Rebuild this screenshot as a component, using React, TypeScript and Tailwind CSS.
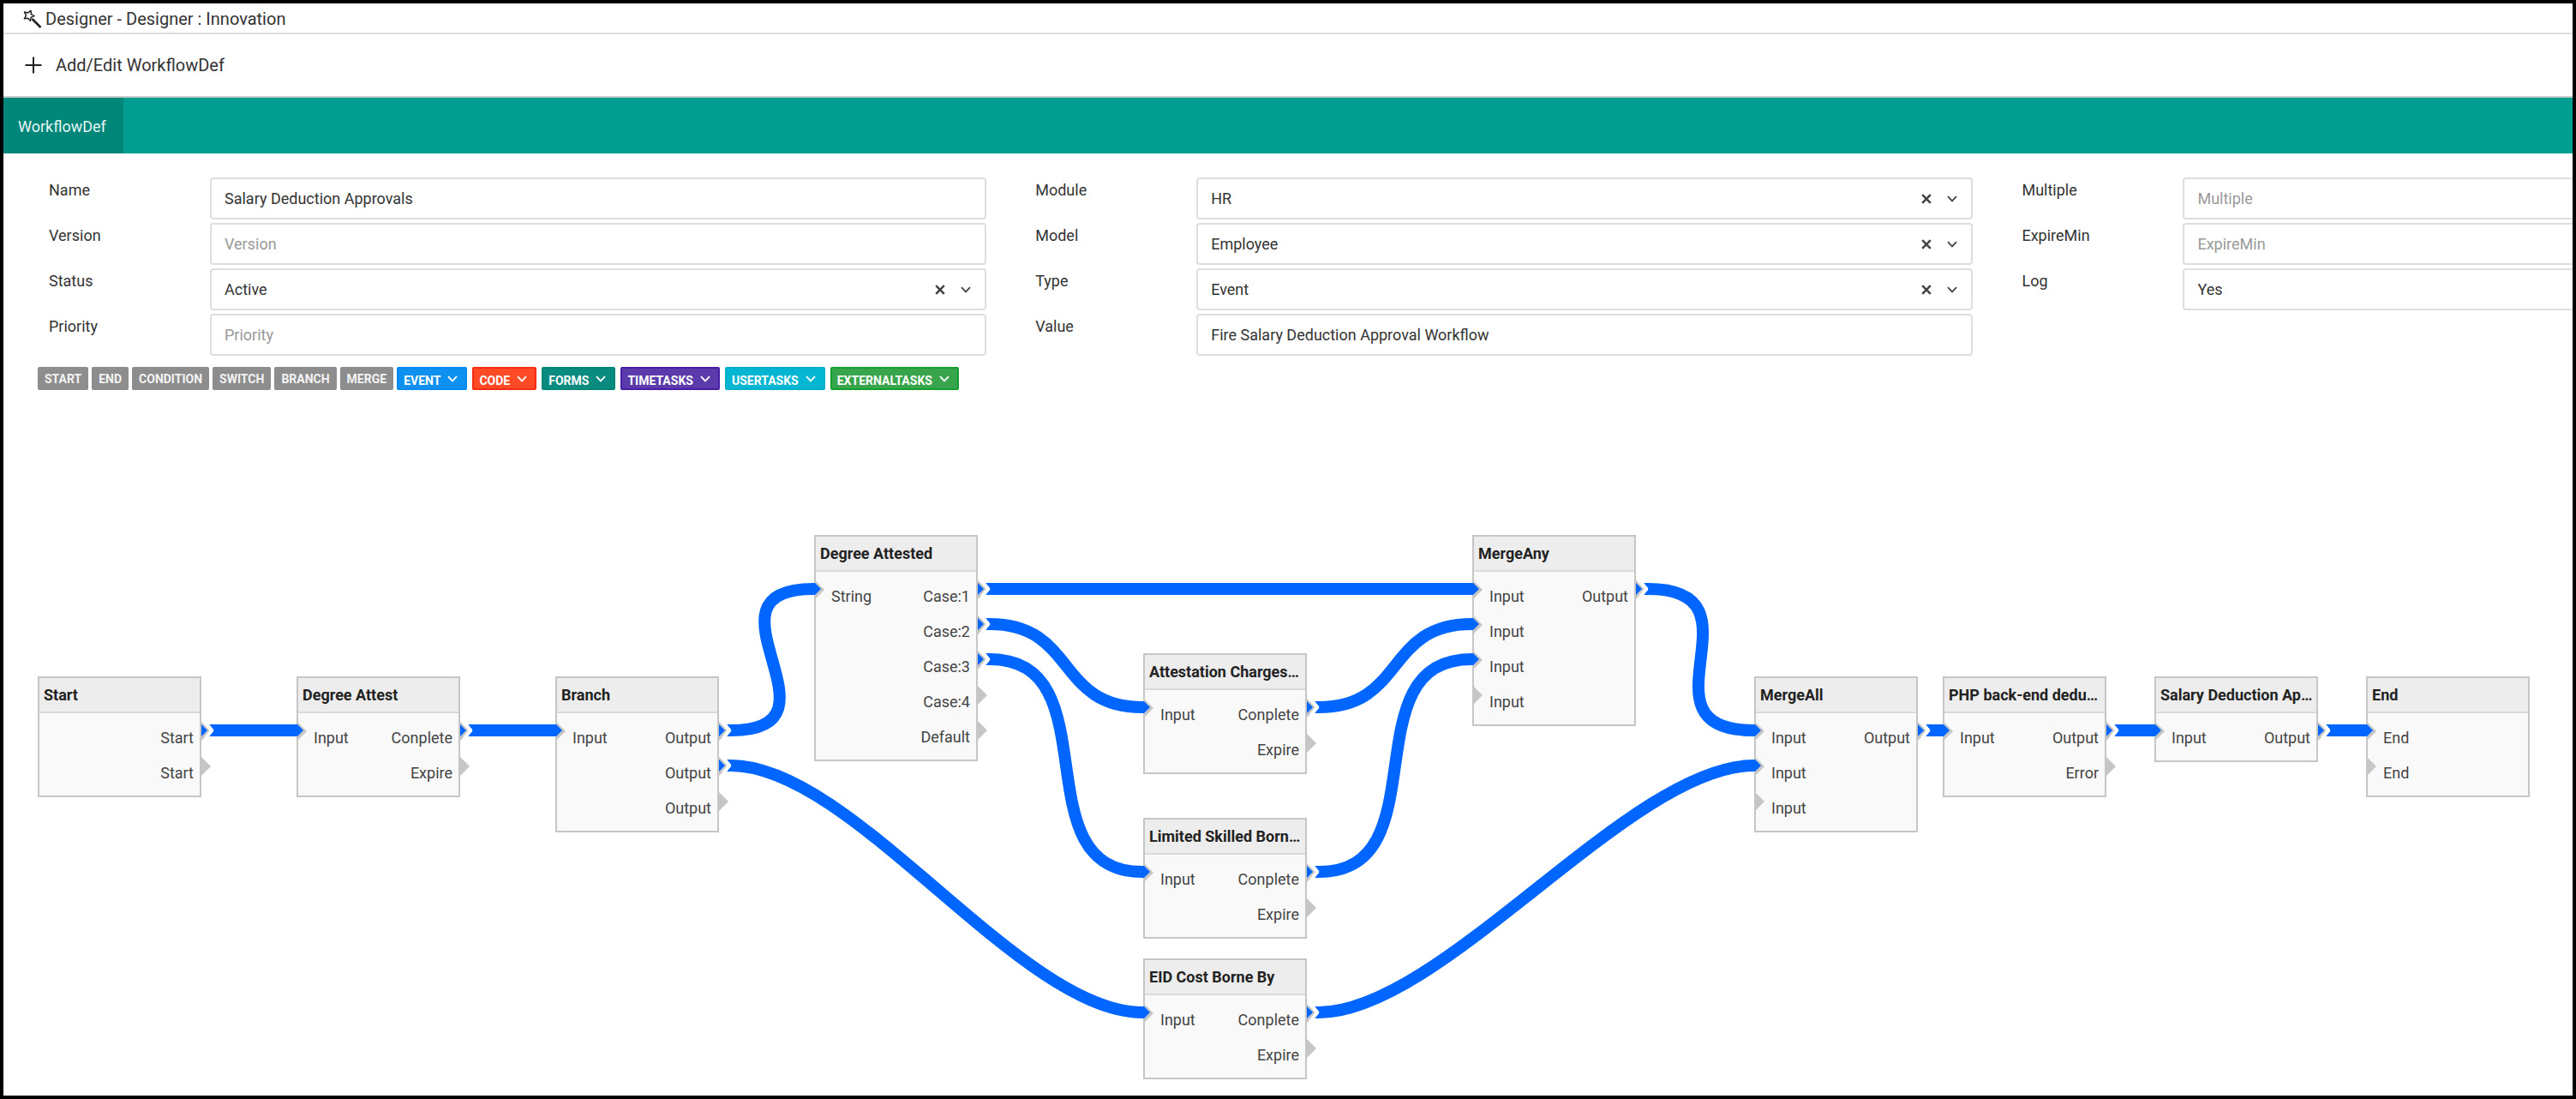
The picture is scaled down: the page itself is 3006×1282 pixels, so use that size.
import { useId } from 'react';

type FieldDef = {
  label: string;
  kind: 'text' | 'select';
  value?: string;
  clearable?: boolean;
};

const COLUMNS: FieldDef[][] = [
  [
    { label: 'Name', kind: 'text', value: 'Salary Deduction Approvals' },
    { label: 'Version', kind: 'text' },
    { label: 'Status', kind: 'select', value: 'Active', clearable: true },
    { label: 'Priority', kind: 'text' },
  ],
  [
    { label: 'Module', kind: 'select', value: 'HR', clearable: true },
    { label: 'Model', kind: 'select', value: 'Employee', clearable: true },
    { label: 'Type', kind: 'select', value: 'Event', clearable: true },
    { label: 'Value', kind: 'text', value: 'Fire Salary Deduction Approval Workflow' },
  ],
  [
    { label: 'Multiple', kind: 'text' },
    { label: 'ExpireMin', kind: 'text' },
    { label: 'Log', kind: 'select', value: 'Yes', clearable: true },
  ],
];

const SHAPES = ['START', 'END', 'CONDITION', 'SWITCH', 'BRANCH', 'MERGE'];

const MENUS = [
  { label: 'EVENT', color: 'bg-[#0d90f0] border-[#0089f2]' },
  { label: 'CODE', color: 'bg-[#ff4a26] border-[#fb2c14]' },
  { label: 'FORMS', color: 'bg-[#098c7f] border-[#008577]' },
  { label: 'TIMETASKS', color: 'bg-[#5b3bab] border-[#4a1fa8]' },
  { label: 'USERTASKS', color: 'bg-[#04b6d2] border-[#00b0cd]' },
  { label: 'EXTERNALTASKS', color: 'bg-[#38a54c] border-[#139f30]' },
];

type NodeDef = {
  id: string;
  title: string;
  x: number;
  y: number;
  inputs: string[];
  outputs: string[];
};

const NODES: NodeDef[] = [
  { id: 'start', title: 'Start', x: 0, y: 325, inputs: [], outputs: ['Start', 'Start'] },
  { id: 'attest', title: 'Degree Attest', x: 302, y: 325, inputs: ['Input'], outputs: ['Conplete', 'Expire'] },
  { id: 'branch', title: 'Branch', x: 604, y: 325, inputs: ['Input'], outputs: ['Output', 'Output', 'Output'] },
  { id: 'attested', title: 'Degree Attested', x: 906, y: 160, inputs: ['String'], outputs: ['Case:1', 'Case:2', 'Case:3', 'Case:4', 'Default'] },
  { id: 'charges', title: 'Attestation Charges…', x: 1290, y: 298, inputs: ['Input'], outputs: ['Conplete', 'Expire'] },
  { id: 'limited', title: 'Limited Skilled Born…', x: 1290, y: 490, inputs: ['Input'], outputs: ['Conplete', 'Expire'] },
  { id: 'eid', title: 'EID Cost Borne By', x: 1290, y: 654, inputs: ['Input'], outputs: ['Conplete', 'Expire'] },
  { id: 'any', title: 'MergeAny', x: 1674, y: 160, inputs: ['Input', 'Input', 'Input', 'Input'], outputs: ['Output'] },
  { id: 'all', title: 'MergeAll', x: 2003, y: 325, inputs: ['Input', 'Input', 'Input'], outputs: ['Output'] },
  { id: 'php', title: 'PHP back-end dedu…', x: 2223, y: 325, inputs: ['Input'], outputs: ['Output', 'Error'] },
  { id: 'salary', title: 'Salary Deduction Ap…', x: 2470, y: 325, inputs: ['Input'], outputs: ['Output'] },
  { id: 'end', title: 'End', x: 2717, y: 325, inputs: ['End', 'End'], outputs: [] },
];

// [source node, output index, target node, input index]
const LINKS: [string, number, string, number][] = [
  ['start', 0, 'attest', 0],
  ['attest', 0, 'branch', 0],
  ['branch', 0, 'attested', 0],
  ['branch', 1, 'eid', 0],
  ['attested', 0, 'any', 0],
  ['attested', 1, 'charges', 0],
  ['attested', 2, 'limited', 0],
  ['charges', 0, 'any', 1],
  ['limited', 0, 'any', 2],
  ['eid', 0, 'all', 1],
  ['any', 0, 'all', 0],
  ['all', 0, 'php', 0],
  ['php', 0, 'salary', 0],
  ['salary', 0, 'end', 0],
];

const NODE_WIDTH = 191;
const PORT_TOP = 63;
const PORT_PITCH = 41;
const MAX_BEND = 143;

const nodeById = (id: string) => NODES.find((n) => n.id === id)!;

function WandIcon() {
  return (
    <svg viewBox="0 0 22 22" className="h-[22px] w-[22px]" aria-hidden="true">
      <path
        d="M1.5 3 L5.6 3.9 L9 1.4 L9.4 5.6 L13 7.6 L9.2 9.2 L8.4 13.2 L5.6 10.2 L1.4 10.8 L3.5 7.2 Z"
        fill="none"
        stroke="#222"
        strokeWidth="1.5"
        strokeLinejoin="round"
      />
      <path d="M10.5 11 L20.5 21" stroke="#222" strokeWidth="2.6" />
    </svg>
  );
}

function PlusIcon() {
  return (
    <svg viewBox="0 0 20 20" className="h-5 w-5" aria-hidden="true">
      <path d="M10 0.5V19.5M0.5 10H19.5" stroke="#222" strokeWidth="2" />
    </svg>
  );
}

function Chevron({ className }: { className: string }) {
  return (
    <svg viewBox="0 0 12 8" className={className} fill="none" stroke="currentColor" strokeWidth="1.8" aria-hidden="true">
      <path d="M1 1.2L6 6.4L11 1.2" />
    </svg>
  );
}

function Field({ field }: { field: FieldDef }) {
  const id = useId();
  const box =
    'h-[49px] w-full rounded-sm border-2 border-[#dedede] bg-white px-[15px] text-lg text-[#333] outline-none placeholder:text-[#999]';
  return (
    <div className="flex">
      <label htmlFor={id} className="w-[188px] shrink-0 pt-[5px] text-lg leading-5 text-[#333]">
        {field.label}
      </label>
      <div className="relative flex-1">
        {field.kind === 'text' ? (
          <input id={id} type="text" className={box} defaultValue={field.value} placeholder={field.label} />
        ) : (
          <>
            <select id={id} className={box + ' appearance-none'} defaultValue={field.value}>
              <option>{field.value}</option>
            </select>
            {field.clearable && (
              <button type="button" aria-label={'Clear ' + field.label} className="absolute inset-y-0 right-12 flex items-center text-[#444]">
                <svg viewBox="0 0 12 12" className="h-3 w-3" stroke="currentColor" strokeWidth="2.6" aria-hidden="true">
                  <path d="M1.2 1.2L10.8 10.8M10.8 1.2L1.2 10.8" />
                </svg>
              </button>
            )}
            <span className="pointer-events-none absolute inset-y-0 right-[18px] flex items-center text-[#444]">
              <Chevron className="h-2 w-3" />
            </span>
          </>
        )}
      </div>
    </div>
  );
}

function FlowNode({ node }: { node: NodeDef }) {
  return (
    <section
      className="absolute w-[191px] border-2 border-[#c6c6c6] bg-[#f9f9f9]"
      style={{ left: node.x, top: node.y }}
    >
      <h3 className="h-[41px] border-b-2 border-[#dadada] bg-[#ededed] pl-[5px] text-lg leading-[39px] font-bold whitespace-nowrap text-[#222]">
        {node.title}
      </h3>
      <div className="flex justify-between pt-2 pr-[7px] pb-1.5 pl-[18px] text-lg leading-[41px] text-[#444]">
        <ul>
          {node.inputs.map((label, i) => (
            <li key={i}>{label}</li>
          ))}
        </ul>
        <ul className="text-right">
          {node.outputs.map((label, i) => (
            <li key={i}>{label}</li>
          ))}
        </ul>
      </div>
    </section>
  );
}

function PortArrow({ x, y }: { x: number; y: number }) {
  return <path d={`M${x} ${y - 11}L${x + 11} ${y}L${x} ${y + 11}Z`} fill="#c6c6c6" />;
}

function Link({ link }: { link: [string, number, string, number] }) {
  const [fromId, fromPort, toId, toPort] = link;
  const from = nodeById(fromId);
  const to = nodeById(toId);
  const x1 = from.x + NODE_WIDTH;
  const y1 = from.y + PORT_TOP + fromPort * PORT_PITCH;
  const x2 = to.x;
  const y2 = to.y + PORT_TOP + toPort * PORT_PITCH;
  const startX = x1 + 14;
  const endX = x2 - 1;
  const bend = Math.min(MAX_BEND, Math.max((endX - startX) / 2, Math.abs(y2 - y1) * 1.04));
  return (
    <g>
      <path
        d={`M${startX} ${y1}C${startX + bend} ${y1} ${endX - bend} ${y2} ${endX} ${y2}`}
        fill="none"
        stroke="#0066ff"
        strokeWidth="14"
      />
      <path d={`M${x1 + 9} ${y1 - 7}H${x1 + 15}V${y1 + 7}H${x1 + 9}L${x1 + 15} ${y1}Z`} fill="#0066ff" />
      <path d={`M${x1 + 5} ${y1 - 9}L${x1 + 12} ${y1}L${x1 + 5} ${y1 + 9}`} fill="none" stroke="#fff" strokeWidth="4" />
      <path d={`M${x1} ${y1 - 7}L${x1 + 7} ${y1}L${x1} ${y1 + 7}Z`} fill="#0066ff" />
      <path d={`M${endX - 1} ${y2 - 7}H${x2 + 1}L${x2 + 8} ${y2}L${x2 + 1} ${y2 + 7}H${endX - 1}Z`} fill="#0066ff" />
    </g>
  );
}

function FlowCanvas() {
  return (
    <main className="relative mt-[9px] ml-10 h-[814px]">
      {NODES.map((node) => (
        <FlowNode key={node.id} node={node} />
      ))}
      <svg className="pointer-events-none absolute inset-0 h-full w-full overflow-visible" aria-hidden="true">
        {NODES.map((node) => (
          <g key={node.id}>
            {node.inputs.map((_, i) => (
              <PortArrow key={i} x={node.x + 1} y={node.y + PORT_TOP + 1 + i * PORT_PITCH} />
            ))}
            {node.outputs.map((_, i) => (
              <PortArrow key={i} x={node.x + NODE_WIDTH} y={node.y + PORT_TOP + 1 + i * PORT_PITCH} />
            ))}
          </g>
        ))}
        {LINKS.map((link, i) => (
          <Link key={i} link={link} />
        ))}
      </svg>
    </main>
  );
}

export default function App() {
  return (
    <div className="min-h-screen overflow-hidden border-4 border-black bg-white font-[Roboto,sans-serif] text-[#333]">
      <header>
        <div className="flex h-9 items-center gap-1 border-b-2 border-[#dddddd] pt-px pl-[23px] text-xl">
          <WandIcon />
          <h1>Designer - Designer : Innovation</h1>
        </div>
        <div className="flex h-[74px] items-center gap-4 border-b-2 border-[#c8cccb] pl-[25px] text-xl">
          <PlusIcon />
          <h2>Add/Edit WorkflowDef</h2>
        </div>
      </header>
      <nav className="flex h-[65px] bg-[#009e90]">
        <button type="button" className="bg-[#00877a] pt-0.5 pr-5 pl-[17px] text-lg text-[#e6f5f3]">
          WorkflowDef
        </button>
      </nav>
      <form className="grid w-[115.2%] grid-cols-3 pt-7">
        {COLUMNS.map((fields, i) => (
          <div key={i} className="flex flex-col gap-1 pr-1 pl-[53px]">
            {fields.map((field) => (
              <Field key={field.label} field={field} />
            ))}
          </div>
        ))}
      </form>
      <div className="mt-[13px] ml-10 flex gap-1 text-sm font-bold text-[#f3f3f3]">
        <div className="flex gap-1">
          {SHAPES.map((label) => (
            <button key={label} type="button" className="h-[27px] rounded-xs bg-[#8d8d8d] px-2 pt-px">
              {label}
            </button>
          ))}
        </div>
        <div className="flex gap-1.5">
          {MENUS.map(({ label, color }) => (
            <button
              key={label}
              type="button"
              className={'flex h-[27px] items-center gap-2 rounded-xs border-2 pr-[9px] pl-[6px] text-white ' + color}
            >
              <span className="pt-1">{label}</span>
              <Chevron className="h-2 w-3" />
            </button>
          ))}
        </div>
      </div>
      <FlowCanvas />
    </div>
  );
}
